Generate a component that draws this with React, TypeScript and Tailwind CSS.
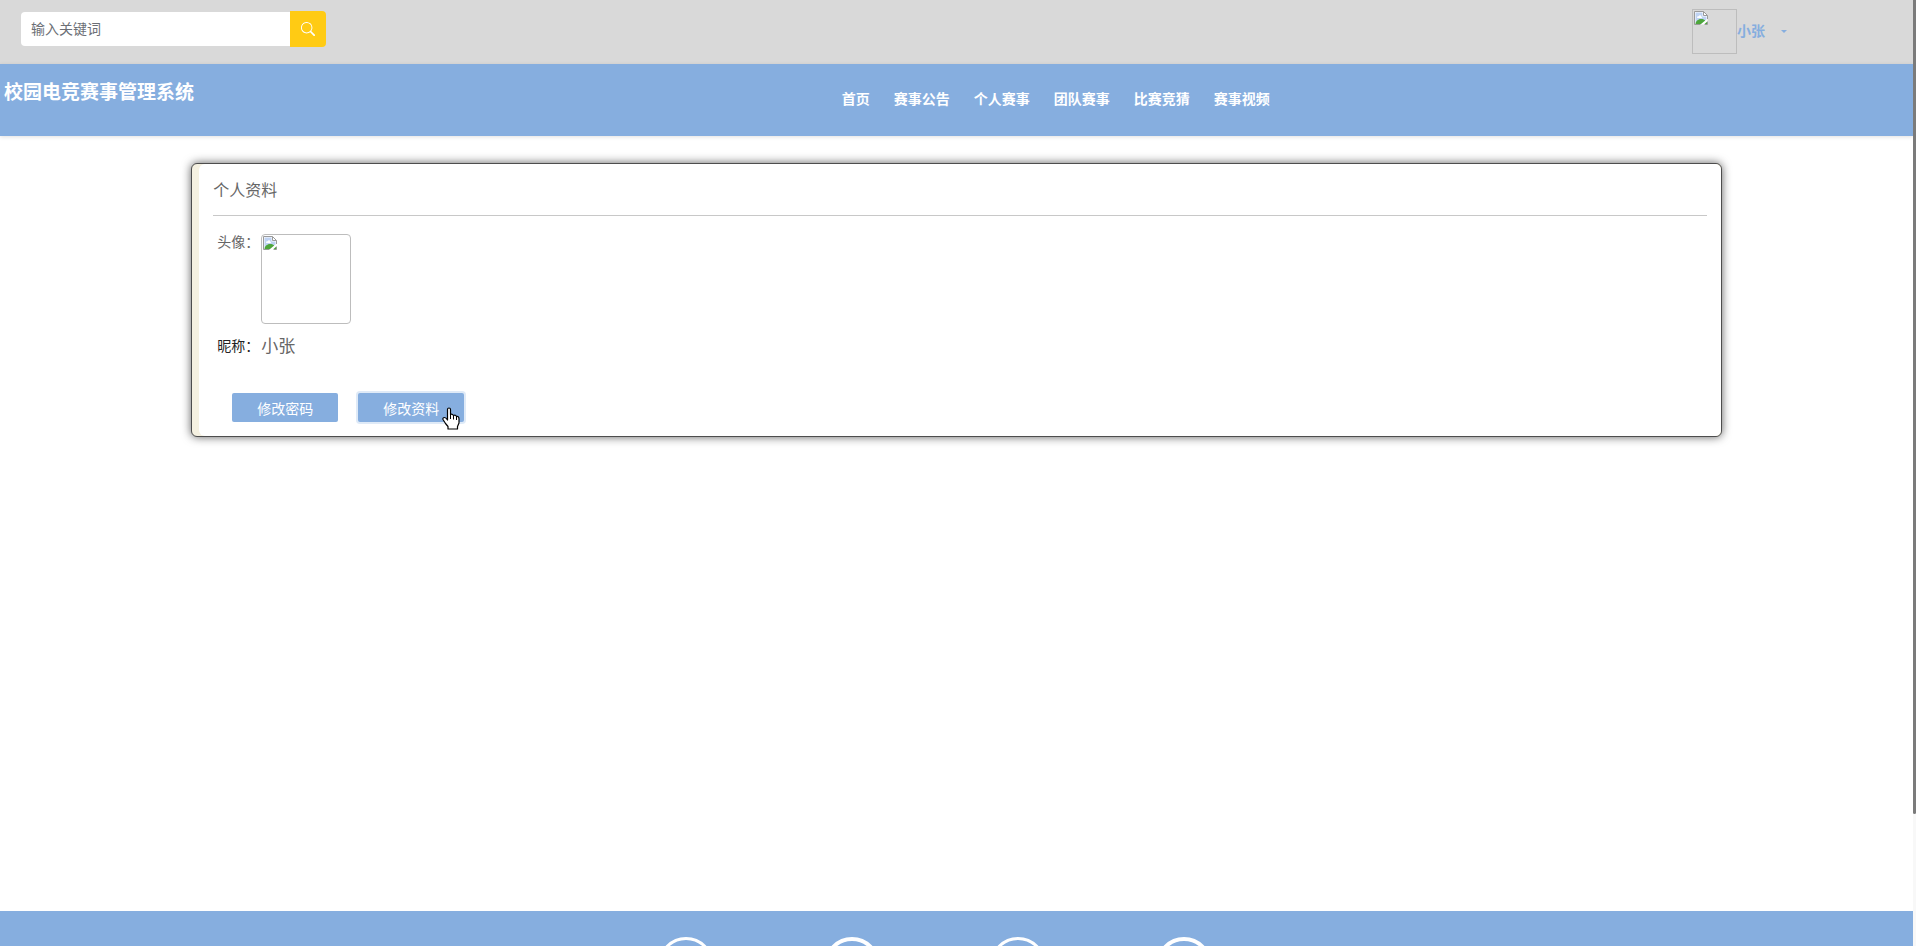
import { useState } from "react";
import { BsSearch } from "react-icons/bs";

const navItems = ["首页", "赛事公告", "个人赛事", "团队赛事", "比赛竞猜", "赛事视频"];

const footerBadges = [
  { id: "contact", stroke: 3 },
  { id: "service", stroke: 4 },
  { id: "location", stroke: 3 },
  { id: "about", stroke: 4 },
];

function MissingImage({ className }: { className: string }) {
  return (
    <div role="img" aria-label="头像" className={`border border-[#bdbdbd] ${className}`}>
      <svg width="16" height="16" viewBox="0 0 16 16">
        <path d="M1.5 1.5h9l4 4v9h-13z" fill="#fff" />
        <path d="M2.500 2.500h7v4h4v3L8 13.500H2.500z" fill="#bfd3f3" />
        <path d="M4 7.5c0-1 1-1.5 1.7-1.2C6 5 8 5 8.2 6.5c1 0 1.2 1.3.3 1.5H4.5z" fill="#fff" />
        <path d="M2.500 14c0-2.500 2.500-5 5.500-5 2.200 0 3.500.7 4.200 1.500L8 14z" fill="#4ea63b" />
        <path d="M11.500 14l2.500-2.200V14z" fill="#4ea63b" />
        <path
          d="M7.500 14.500h-6v-13h9l4 4v3.500M10.500 1.500v4h4M11.500 14.500h3v-3"
          fill="none"
          stroke="#9a9a9a"
        />
      </svg>
    </div>
  );
}

function HandCursor() {
  return (
    <svg
      className="pointer-events-none absolute top-3.5 right-1"
      width="18"
      height="23"
      viewBox="0 0 18 23"
    >
      <path
        d="M5.500 13V2.500Q5.500 1 7 1T8.500 2.500V7.500Q10 6.500 11.500 8.500Q13.500 7.500 14.500 9.500Q17 9 17 12V16L15.500 19.500V22H6V19.500L3.500 16.500L1 12.500Q.5 10.500 2.500 10.500Q4 10.500 5.500 13z"
        fill="#fff"
        stroke="#000"
        strokeWidth="1.200"
        strokeLinejoin="round"
      />
      <path d="M8.500 7.500v4.500M11.500 8.500v4M14.500 9.500v3.500" stroke="#000" />
    </svg>
  );
}

function TopBar() {
  const [keyword, setKeyword] = useState<string>("");

  return (
    <div className="flex h-16 items-start justify-between bg-[#d9d9d9] pl-[21px]">
      <form className="flex items-center pt-[11px]" onSubmit={(event) => event.preventDefault()}>
        <input
          type="text"
          aria-label="输入关键词"
          placeholder="输入关键词"
          className="h-[34px] w-[269px] rounded-l-sm bg-white px-2.5 pb-0.5 text-sm text-[#555] outline-none placeholder:text-[#6c6f76]"
          value={keyword}
          onChange={(event) => setKeyword(event.target.value)}
        />
        <button
          type="submit"
          aria-label="搜索"
          className="flex size-9 items-center justify-center rounded-r-sm bg-[#ffcb14] text-white"
        >
          <BsSearch size={14} />
        </button>
      </form>

      <button
        type="button"
        className="mr-[126px] flex items-center pt-[9px] text-sm font-bold text-[#86aedf]"
      >
        <MissingImage className="size-[45px]" />
        <span className="pb-0.5">小张</span>
        <span className="ml-4 border-x-[3px] border-t-[3px] border-x-transparent border-t-[#86aedf]" />
      </button>
    </div>
  );
}

function Header() {
  return (
    <header className="flex h-[72px] items-start bg-[#86aedf] text-white shadow-[0_1px_4px_#0000001f]">
      <h1 className="w-[44%] pt-[13px] pl-1 text-[19px] leading-[30px] font-bold">
        校园电竞赛事管理系统
      </h1>
      <nav className="flex gap-6 pt-6 text-sm leading-[22px] font-bold whitespace-nowrap">
        {navItems.map((item) => (
          <a href="#" key={item}>
            {item}
          </a>
        ))}
      </nav>
    </header>
  );
}

function Profile() {
  return (
    <section className="mx-auto w-4/5 rounded-[6px] border border-[#4d4d4d] bg-[#f5f1e1] pl-[7px] shadow-[0_0_10px_#000000a0]">
      <div className="rounded-[6px] bg-white px-3.5 pt-3.5 pb-3.5">
        <h2 className="border-b border-[#c8c8c8] pb-[13px] text-base leading-6 text-[#666]">
          个人资料
        </h2>
        <dl className="grid grid-cols-[44px_1fr] gap-y-2 pt-[18px] pl-1 text-[#666]">
          <dt className="text-sm leading-4 whitespace-nowrap">头像：</dt>
          <dd>
            <MissingImage className="size-[90px] rounded-[4px]" />
          </dd>
          <dt className="text-sm leading-7 whitespace-nowrap text-[#222]">昵称：</dt>
          <dd className="text-[17px] leading-7">小张</dd>
        </dl>
        <div className="flex gap-5 pt-[33px] pl-[19px] text-sm text-white">
          <button type="button" className="h-[29px] w-[106px] rounded-[2px] bg-[#86aedf] pt-0.5">
            修改密码
          </button>
          <button
            type="button"
            className="relative h-[29px] w-[106px] rounded-[2px] bg-[#86aedf] pt-0.5 ring-2 ring-[#dfeaf7]"
          >
            修改资料
            <HandCursor />
          </button>
        </div>
      </div>
    </section>
  );
}

function Footer() {
  return (
    <footer className="flex h-48 justify-center gap-[110px] bg-[#86aedf] pt-[26px] pr-11">
      {footerBadges.map((badge) => (
        <svg key={badge.id} width="56" height="56" viewBox="0 0 56 56">
          <circle
            cx="28"
            cy="28"
            r={28 - badge.stroke / 2}
            fill="none"
            stroke="#fff"
            strokeWidth={badge.stroke}
          />
        </svg>
      ))}
    </footer>
  );
}

export default function App() {
  return (
    <div className="flex h-screen overflow-hidden bg-white font-['Open_Sans','Noto_Sans_CJK_SC',sans-serif]">
      <div className="min-w-0 flex-1 overflow-hidden">
        <TopBar />
        <Header />
        <main className="min-h-[775px] pt-[27px]">
          <Profile />
        </main>
        <Footer />
      </div>
      <div className="w-[3px] bg-[#f8f8f8]">
        <div className="h-[86%] rounded-b-sm bg-[#7b7b7b]" />
      </div>
    </div>
  );
}
